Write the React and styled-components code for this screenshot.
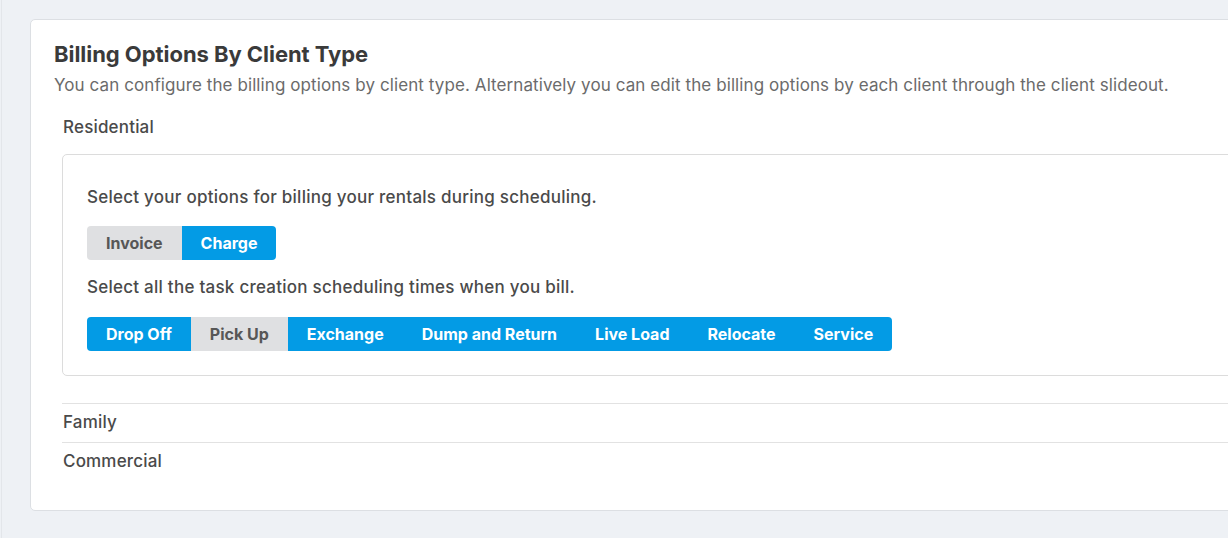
import React, {useState} from 'react';
import styled, {createGlobalStyle} from "styled-components";

const GlobalStyle = createGlobalStyle`
  html, body {
    margin: 0;
    padding: 0;
    background: #eef1f5;
    font-family: Inter, "Noto Sans", sans-serif;
    overflow: hidden;
  }
`;

const billingModes = ['Invoice', 'Charge'];
const taskTimes = ['Drop Off', 'Pick Up', 'Exchange', 'Dump and Return', 'Live Load', 'Relocate', 'Service'];

const ToggleGroup = ({options, isActive, onToggle}) => (
    <GroupWrap>
        {options.map(option => (
            <ToggleButton
                key={option}
                $active={isActive(option)}
                onClick={() => onToggle(option)}>
                {option}
            </ToggleButton>
        ))}
    </GroupWrap>
);

const App = () => {
    const [mode, setMode] = useState('Charge');
    const [times, setTimes] = useState(taskTimes.filter(t => t !== 'Pick Up'));

    const toggleTime = (time) => {
        setTimes(prev => prev.includes(time) ? prev.filter(t => t !== time) : [...prev, time]);
    }

    return (
        <Page>
            <GlobalStyle/>
            <Card>
                <Title>Billing Options By Client Type</Title>
                <Subtitle>
                    You can configure the billing options by client type. Alternatively you can edit the billing
                    options by each client through the client slideout.
                </Subtitle>

                <ClientTypes>
                    <TypeLabel>Residential</TypeLabel>
                    <OptionsBox>
                        <Prompt>Select your options for billing your rentals during scheduling.</Prompt>
                        <ToggleGroup
                            options={billingModes}
                            isActive={option => option === mode}
                            onToggle={setMode}
                        />
                        <Prompt $spaced>Select all the task creation scheduling times when you bill.</Prompt>
                        <ToggleGroup
                            options={taskTimes}
                            isActive={option => times.includes(option)}
                            onToggle={toggleTime}
                        />
                    </OptionsBox>

                    <TypeRow>Family</TypeRow>
                    <TypeRow>Commercial</TypeRow>
                </ClientTypes>
            </Card>
        </Page>
    );
};

export default App;


const Page = styled.div`
  min-height: 538px;
  box-sizing: border-box;
  padding: 19px 0 0 28px;
  border-left: 1px solid #e3e6ea;
  margin-left: 1px;
`;

const Card = styled.div`
  width: 1240px;
  box-sizing: border-box;
  background: #ffffff;
  border: 1px solid #dcdfe3;
  border-radius: 5px;
  padding: 22px 23px 29px 23px;
`;

const Title = styled.h2`
  margin: 0;
  font-size: 22px;
  line-height: 24px;
  font-weight: 700;
  color: #3a3a3a;
  letter-spacing: -0.05px;
`;

const Subtitle = styled.p`
  margin: 7px 0 0;
  font-size: 17px;
  line-height: 24px;
  color: #6b6b6b;
  letter-spacing: 0.09px;
`;

const ClientTypes = styled.div`
  margin: 18px 0 0 8px;
  display: flex;
  flex-direction: column;
`;

const TypeLabel = styled.div`
  font-size: 17px;
  line-height: 24px;
  font-weight: 500;
  color: #4a4a4a;
  padding-left: 1px;
  letter-spacing: 0.18px;
`;

const OptionsBox = styled.div`
  margin-top: 15px;
  border: 1px solid #dcdcdc;
  border-radius: 5px;
  padding: 30px 24px 24px;
`;

const Prompt = styled.p`
  margin: ${({$spaced}) => $spaced ? '15px 0 18px' : '0 0 17px'};
  font-size: 17px;
  line-height: 24px;
  font-weight: 500;
  color: #4a4a4a;
  letter-spacing: 0.25px;
`;

const GroupWrap = styled.div`
  display: inline-flex;
  align-self: flex-start;
  border-radius: 4px;
  overflow: hidden;
`;

const ToggleButton = styled.button`
  border: none;
  margin: 0;
  height: 34px;
  padding: 0 19px;
  font-family: inherit;
  font-size: 16px;
  font-weight: 700;
  cursor: pointer;
  background: ${({$active}) => $active ? '#039be5' : '#dfe0e2'};
  color: ${({$active}) => $active ? '#ffffff' : '#575757'};
`;

const TypeRow = styled.div`
  font-size: 17px;
  line-height: 24px;
  font-weight: 500;
  color: #4a4a4a;
  border-top: 1px solid #e2e2e2;
  padding: 6px 0 8px 1px;
  letter-spacing: 0.18px;

  ${OptionsBox} + & {
    margin-top: 27px;
  }
`;
